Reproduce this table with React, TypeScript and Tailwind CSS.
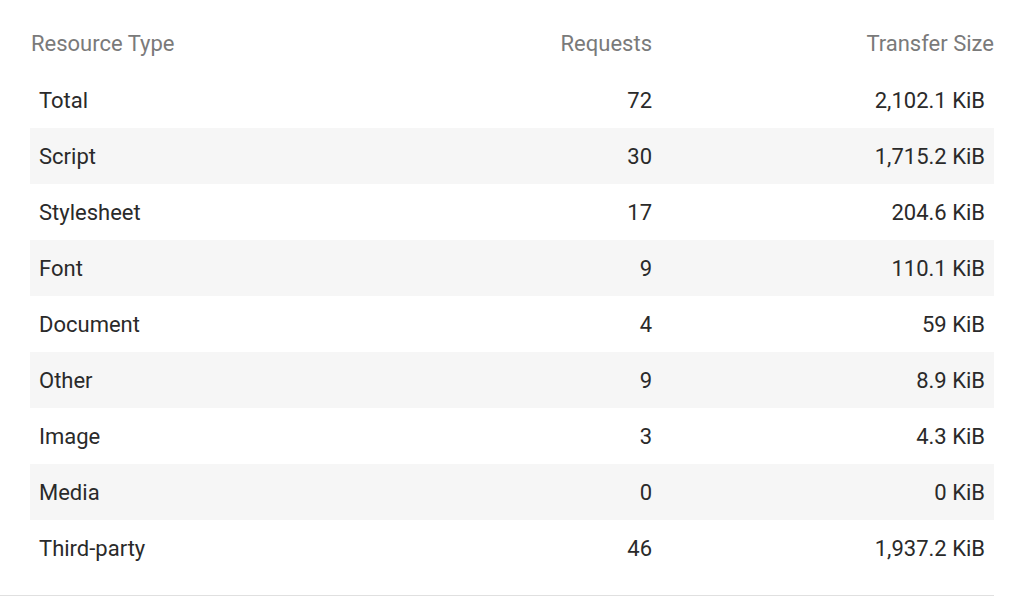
const rows = [
  { type: "Total", requests: "72", size: "2,102.1 KiB" },
  { type: "Script", requests: "30", size: "1,715.2 KiB" },
  { type: "Stylesheet", requests: "17", size: "204.6 KiB" },
  { type: "Font", requests: "9", size: "110.1 KiB" },
  { type: "Document", requests: "4", size: "59 KiB" },
  { type: "Other", requests: "9", size: "8.9 KiB" },
  { type: "Image", requests: "3", size: "4.3 KiB" },
  { type: "Media", requests: "0", size: "0 KiB" },
  { type: "Third-party", requests: "46", size: "1,937.2 KiB" },
];

export default function App() {
  return (
    <div className="h-[604px] w-[1024px] bg-white font-['Roboto',sans-serif] text-[22px] leading-[26px]">
      <div className="w-[994px] border-b border-[#e0e0e0] pb-[19px] pl-[30px] pt-[16px]">
        {/* Header */}
        <div className="grid h-[56px] grid-cols-[1fr_200px_342px] items-center text-[#7a7a7a]">
          <span className="pl-[1px]">Resource Type</span>
          <span className="text-right">Requests</span>
          <span className="text-right">Transfer Size</span>
        </div>

        {/* Rows */}
        {rows.map((row, i) => (
          <div
            key={row.type}
            className={`grid h-[56px] grid-cols-[1fr_200px_342px] items-center pt-[1px] text-[#2a2a2a] ${
              i % 2 === 1 ? "bg-[#f6f6f6]" : ""
            }`}
          >
            <span className="pl-[9px]">{row.type}</span>
            <span className="text-right">{row.requests}</span>
            <span className="pr-[9px] text-right">{row.size}</span>
          </div>
        ))}
      </div>
    </div>
  );
}
